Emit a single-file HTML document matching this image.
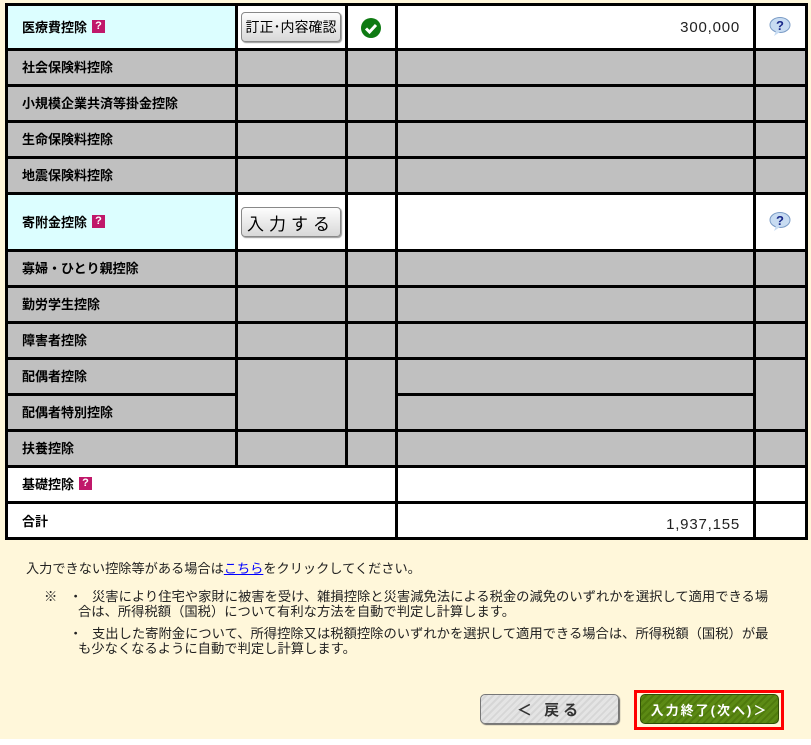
<!DOCTYPE html>
<html><head><meta charset="utf-8"><style>
*{margin:0;padding:0;box-sizing:border-box}
body{width:811px;height:745px;background:#fff;position:relative;overflow:hidden;font-family:"Liberation Sans","Noto Sans CJK JP",sans-serif;color:#000}
#bg{position:absolute;left:0;top:0;width:811px;height:739px;background:#fff7da}
#tbl{position:absolute;left:5px;top:3px;width:803px;height:537px;background:#000}
.c{position:absolute;display:flex;align-items:center}
.g{background:#c0c0c0}.w{background:#fff}.y{background:#dcfeff}
.l{padding-left:14px;font-size:13px;font-weight:bold;padding-bottom:2px}
.q{display:inline-block;width:13px;height:13px;background:#c0186a;color:#fff;font-size:11px;line-height:13px;text-align:center;margin-left:5px;font-weight:bold}
.v{justify-content:flex-end;padding-right:13px;font-size:15px;letter-spacing:0.8px;color:#222}
.btn{position:absolute;left:241px;width:100px;height:30px;border:1px solid #888;border-radius:4px;background:linear-gradient(#fdfdfd,#d8d8d8);box-shadow:1px 1px 1px #999;font-size:14px;display:flex;align-items:center;justify-content:center;white-space:nowrap}
.note{position:absolute;font-size:13.3px;color:#222;line-height:14px;white-space:nowrap}
</style></head><body>
<div id="bg"></div>
<div id="tbl">
<div class="c y l" style="left:3px;top:3px;width:227px;height:42px">医療費控除<span class="q">?</span></div>
<div class="c w" style="left:233px;top:3px;width:107px;height:42px"></div>
<div class="c w" style="left:343px;top:3px;width:47px;height:42px"></div>
<div class="c w v" style="left:393px;top:3px;width:355px;height:42px">300,000</div>
<div class="c w" style="left:751px;top:3px;width:49px;height:42px"></div>
<div class="c g l" style="left:3px;top:48px;width:227px;height:33px">社会保険料控除</div>
<div class="c g" style="left:233px;top:48px;width:107px;height:33px"></div><div class="c g" style="left:343px;top:48px;width:47px;height:33px"></div><div class="c g" style="left:393px;top:48px;width:355px;height:33px"></div><div class="c g" style="left:751px;top:48px;width:49px;height:33px"></div>
<div class="c g l" style="left:3px;top:84px;width:227px;height:33px">小規模企業共済等掛金控除</div>
<div class="c g" style="left:233px;top:84px;width:107px;height:33px"></div><div class="c g" style="left:343px;top:84px;width:47px;height:33px"></div><div class="c g" style="left:393px;top:84px;width:355px;height:33px"></div><div class="c g" style="left:751px;top:84px;width:49px;height:33px"></div>
<div class="c g l" style="left:3px;top:120px;width:227px;height:33px">生命保険料控除</div>
<div class="c g" style="left:233px;top:120px;width:107px;height:33px"></div><div class="c g" style="left:343px;top:120px;width:47px;height:33px"></div><div class="c g" style="left:393px;top:120px;width:355px;height:33px"></div><div class="c g" style="left:751px;top:120px;width:49px;height:33px"></div>
<div class="c g l" style="left:3px;top:156px;width:227px;height:33px">地震保険料控除</div>
<div class="c g" style="left:233px;top:156px;width:107px;height:33px"></div><div class="c g" style="left:343px;top:156px;width:47px;height:33px"></div><div class="c g" style="left:393px;top:156px;width:355px;height:33px"></div><div class="c g" style="left:751px;top:156px;width:49px;height:33px"></div>
<div class="c y l" style="left:3px;top:192px;width:227px;height:54px">寄附金控除<span class="q">?</span></div>
<div class="c w" style="left:233px;top:192px;width:107px;height:54px"></div><div class="c w" style="left:343px;top:192px;width:47px;height:54px"></div><div class="c w" style="left:393px;top:192px;width:355px;height:54px"></div><div class="c w" style="left:751px;top:192px;width:49px;height:54px"></div>
<div class="c g l" style="left:3px;top:249px;width:227px;height:33px">寡婦・ひとり親控除</div>
<div class="c g" style="left:233px;top:249px;width:107px;height:33px"></div><div class="c g" style="left:343px;top:249px;width:47px;height:33px"></div><div class="c g" style="left:393px;top:249px;width:355px;height:33px"></div><div class="c g" style="left:751px;top:249px;width:49px;height:33px"></div>
<div class="c g l" style="left:3px;top:285px;width:227px;height:33px">勤労学生控除</div>
<div class="c g" style="left:233px;top:285px;width:107px;height:33px"></div><div class="c g" style="left:343px;top:285px;width:47px;height:33px"></div><div class="c g" style="left:393px;top:285px;width:355px;height:33px"></div><div class="c g" style="left:751px;top:285px;width:49px;height:33px"></div>
<div class="c g l" style="left:3px;top:321px;width:227px;height:33px">障害者控除</div>
<div class="c g" style="left:233px;top:321px;width:107px;height:33px"></div><div class="c g" style="left:343px;top:321px;width:47px;height:33px"></div><div class="c g" style="left:393px;top:321px;width:355px;height:33px"></div><div class="c g" style="left:751px;top:321px;width:49px;height:33px"></div>
<div class="c g l" style="left:3px;top:357px;width:227px;height:33px">配偶者控除</div>
<div class="c g l" style="left:3px;top:393px;width:227px;height:33px">配偶者特別控除</div>
<div class="c g" style="left:233px;top:357px;width:107px;height:69px"></div><div class="c g" style="left:343px;top:357px;width:47px;height:69px"></div>
<div class="c g" style="left:393px;top:357px;width:355px;height:33px"></div><div class="c g" style="left:393px;top:393px;width:355px;height:33px"></div>
<div class="c g" style="left:751px;top:357px;width:49px;height:69px"></div>
<div class="c g l" style="left:3px;top:429px;width:227px;height:33px">扶養控除</div>
<div class="c g" style="left:233px;top:429px;width:107px;height:33px"></div><div class="c g" style="left:343px;top:429px;width:47px;height:33px"></div><div class="c g" style="left:393px;top:429px;width:355px;height:33px"></div><div class="c g" style="left:751px;top:429px;width:49px;height:33px"></div>
<div class="c w l" style="left:3px;top:465px;width:387px;height:33px">基礎控除<span class="q">?</span></div>
<div class="c w" style="left:393px;top:465px;width:355px;height:33px"></div><div class="c w" style="left:751px;top:465px;width:49px;height:33px"></div>
<div class="c w l" style="left:3px;top:501px;width:387px;height:33px;align-items:flex-start;padding-top:7px">合計</div>
<div class="c w v" style="left:393px;top:501px;width:355px;height:33px;padding-top:8px">1,937,155</div>
<div class="c w" style="left:751px;top:501px;width:49px;height:33px"></div>
</div>
<div class="btn" style="top:12px">訂正･内容確認</div>
<div class="btn" style="top:207px;font-size:17px;letter-spacing:5px">入力する</div>
<svg style="position:absolute;left:360px;top:17px" width="22" height="22"><circle cx="11" cy="11" r="10" fill="#0e7a12"/><path d="M6 11.5l3.5 3.5 6.5-7" stroke="#fff" stroke-width="3" fill="none"/></svg>
<svg style="position:absolute;left:767px;top:16px" width="26" height="22"><ellipse cx="13" cy="9" rx="10" ry="7.5" fill="#c8dcf2" stroke="#7b9cc6"/><path d="M9 15l-2 5 6-4z" fill="#c8dcf2"/><text x="13" y="14" font-size="13" font-weight="bold" fill="#1a2a8a" text-anchor="middle" font-family="Liberation Sans">?</text></svg>
<svg style="position:absolute;left:767px;top:211px" width="26" height="22"><ellipse cx="13" cy="9" rx="10" ry="7.5" fill="#c8dcf2" stroke="#7b9cc6"/><path d="M9 15l-2 5 6-4z" fill="#c8dcf2"/><text x="13" y="14" font-size="13" font-weight="bold" fill="#1a2a8a" text-anchor="middle" font-family="Liberation Sans">?</text></svg>
<div class="note" style="left:26px;top:562px;font-size:13.2px">入力できない控除等がある場合は<span style="color:#00f;text-decoration:underline">こちら</span>をクリックしてください。</div>
<div class="note" style="left:44px;top:590px">※</div>
<div class="note" style="left:69px;top:590px">・</div>
<div class="note" style="left:92px;top:590px">災害により住宅や家財に被害を受け、雑損控除と災害減免法による税金の減免のいずれかを選択して適用できる場</div>
<div class="note" style="left:78px;top:605px">合は、所得税額（国税）について有利な方法を自動で判定し計算します。</div>
<div class="note" style="left:69px;top:627px">・</div>
<div class="note" style="left:92px;top:627px">支出した寄附金について、所得控除又は税額控除のいずれかを選択して適用できる場合は、所得税額（国税）が最</div>
<div class="note" style="left:78px;top:642px">も少なくなるように自動で判定し計算します。</div>
<div style="position:absolute;left:480px;top:694px;width:139px;height:30px;border:1px solid #777;border-radius:5px;background:repeating-linear-gradient(135deg,#e4e4e4 0 3px,#d6d6d6 3px 5px);box-shadow:1px 1px 1px #666;font-size:15px;font-weight:bold;color:#333;display:flex;align-items:center;justify-content:center;letter-spacing:4px">＜ 戻る</div>
<div style="position:absolute;left:634px;top:690px;width:150px;height:40px;border:3px solid #f00"></div>
<div style="position:absolute;left:640px;top:694px;width:139px;height:30px;border:1px solid #2f4f06;border-radius:5px;background:repeating-linear-gradient(135deg,#5c8a14 0 3px,#4f7a0c 3px 5px);font-size:13px;font-weight:bold;color:#fff;display:flex;align-items:center;justify-content:center;letter-spacing:2px;white-space:nowrap">入力終了(次へ)＞</div>
</body></html>
